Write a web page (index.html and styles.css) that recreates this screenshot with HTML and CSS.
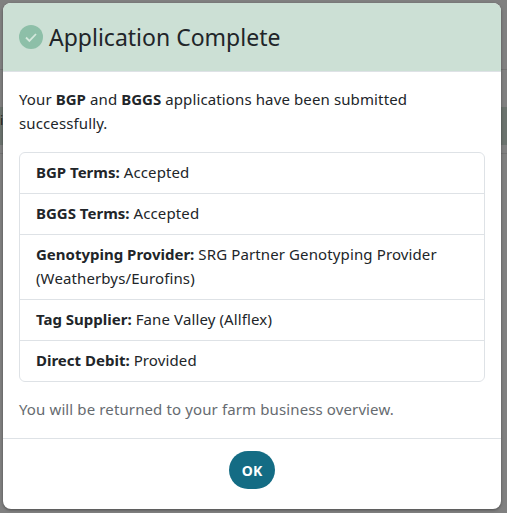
FILE: index.html
```html
<!DOCTYPE html>
<html lang="en">
<head>
    <meta charset="UTF-8">
    <meta name="viewport" content="width=device-width, initial-scale=1.0">
    <title>Application Complete</title>
    <link rel="stylesheet" href="styles.css">
</head>
<body>

    <!-- Page behind the overlay -->
    <div class="backdrop">
        <div class="backdrop-line"></div>
        <div class="backdrop-band"><span class="backdrop-letter">i</span></div>
        <div class="backdrop-line"></div>
    </div>

    <div class="modal">
        <!-- Header -->
        <div class="modal-header">
            <svg class="check-icon" viewBox="0 0 24 24">
                <circle cx="12" cy="12" r="12" fill="#8dbfa8"/>
                <path d="M7 12.5l3.4 3.4L17 9" fill="none" stroke="#d4e8dd" stroke-width="1.8"/>
            </svg>
            <h1>Application Complete</h1>
        </div>

        <!-- Body -->
        <div class="modal-body">
            <p class="intro">Your <b>BGP</b> and <b>BGGS</b> applications have been submitted successfully.</p>
            <ul class="summary">
                <li><b>BGP Terms:</b> Accepted</li>
                <li><b>BGGS Terms:</b> Accepted</li>
                <li><b>Genotyping Provider:</b> SRG Partner Genotyping Provider (Weatherbys/Eurofins)</li>
                <li><b>Tag Supplier:</b> Fane Valley (Allflex)</li>
                <li><b>Direct Debit:</b> Provided</li>
            </ul>
            <p class="note">You will be returned to your farm business overview.</p>
        </div>

        <!-- Footer -->
        <div class="modal-footer">
            <button class="ok-button">OK</button>
        </div>
    </div>

</body>
</html>
```
FILE: styles.css
```css
* {
    box-sizing: border-box;
    margin: 0;
    padding: 0;
}

body {
    position: relative;
    height: 513px;
    overflow: hidden;
    padding: 3px 6px 0 3px;
    background-color: #808080;
    font-family: "Noto Sans", sans-serif;
    font-size: 15px;
    line-height: 24px;
    letter-spacing: 0.12px;
    color: #212529;
}

b {
    letter-spacing: 0;
}

.backdrop {
    position: absolute;
    top: 69px;
    left: 0;
    width: 100%;
}

.backdrop-line {
    height: 1px;
    background-color: #737373;
}

.backdrop-band {
    height: 38px;
    margin: 37px 0 8px;
    background-color: #6b736e;
}

.backdrop-letter {
    font-size: 13px;
    color: #222;
}

.modal {
    position: relative;
    height: 506px;
    background-color: #fff;
    border-radius: 8px;
    overflow: hidden;
    box-shadow: 0 1px 3px rgba(0, 0, 0, 0.4);
}

.modal-header {
    display: flex;
    align-items: center;
    gap: 6px;
    height: 69px;
    padding: 0 16px;
    background-color: #cce0d5;
    border-bottom: 1px solid #dee2e6;
}

.check-icon {
    width: 24px;
    height: 24px;
}

.modal-header h1 {
    font-size: 23px;
    font-weight: 400;
    letter-spacing: 0;
}

.modal-body {
    height: 366px;
    padding: 15px 16px 16px;
}

.intro {
    margin-bottom: 17px;
}

.summary {
    list-style: none;
    border: 1px solid #dee2e6;
    border-radius: 6px;
}

.summary li {
    padding: 7px 16px 9px;
    border-bottom: 1px solid #dee2e6;
}

.summary li:last-child {
    border-bottom: none;
}

.note {
    margin-top: 15px;
    color: #666b70;
}

.modal-footer {
    display: flex;
    justify-content: center;
    padding-top: 12px;
    border-top: 1px solid #dee2e6;
}

.ok-button {
    width: 46px;
    height: 38px;
    font-family: inherit;
    font-size: 14px;
    font-weight: 700;
    letter-spacing: 0;
    color: #fff;
    background-color: #146c84;
    border: none;
    border-radius: 19px;
    cursor: pointer;
}
```
